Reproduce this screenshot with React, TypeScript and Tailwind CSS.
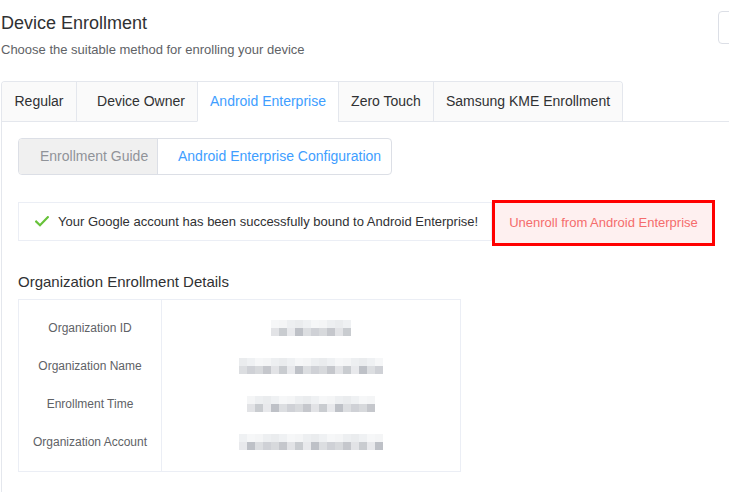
import React from 'react';

const tabs = [
  { label: 'Regular', cls: 'w-[74px]' },
  { label: 'Device Owner', cls: 'w-[121px] pl-[8px]' },
  { label: 'Android Enterprise', cls: 'w-[141px]', active: true },
  { label: 'Zero Touch', cls: 'w-[95px]' },
  { label: 'Samsung KME Enrollment', cls: 'w-[189px]' },
];

const details = [
  { label: 'Organization ID', width: 10, seed: 3 },
  { label: 'Organization Name', width: 18, seed: 7 },
  { label: 'Enrollment Time', width: 16, seed: 11 },
  { label: 'Organization Account', width: 18, seed: 5 },
];

const shades = ['#c4c7cc', '#d3d5d9', '#b8bbc1', '#dfe1e4', '#cacdd2', '#e6e7ea', '#bfc2c7', '#d9dbde'];
const faint = ['#eef0f2', '#f3f4f6', '#e8eaed', '#f6f7f8', '#eceef0'];

// pixelated stand-in for the redacted values
function Redacted({ width, seed }: { width: number; seed: number }) {
  const cells = Array.from({ length: width }, (_, i) => i);
  return (
    <div className="flex flex-col">
      <div className="flex">
        {cells.map(i => (
          <div key={i} className="w-[8px] h-[8px]" style={{ background: faint[(i * 3 + seed) % faint.length] }} />
        ))}
      </div>
      <div className="flex">
        {cells.map(i => (
          <div key={i} className="w-[8px] h-[8px]" style={{ background: shades[(i * 5 + seed) % shades.length] }} />
        ))}
      </div>
    </div>
  );
}

function CheckIcon() {
  return (
    <svg width="14" height="11" viewBox="0 0 14 11" className="shrink-0">
      <polyline points="1.2,5.6 5,9.2 12.8,1.2" fill="none" stroke="#67c23a" strokeWidth="2.2" strokeLinecap="square" />
    </svg>
  );
}

export default function App() {
  return (
    <div className="w-full min-h-[492px] overflow-hidden bg-white text-[#303133] pl-[1px] whitespace-nowrap" style={{ fontFamily: '"Liberation Sans", Arial, sans-serif' }}>
      {/* Header */}
      <div className="flex items-start">
        <div className="flex-1 pt-[11px]">
          <h1 className="text-[18px] leading-[24px] font-normal text-[#303133]">Device Enrollment</h1>
          <p className="text-[13px] leading-[20px] text-[#606266] mt-[5px]">Choose the suitable method for enrolling your device</p>
        </div>
        <button className="mt-[11px] w-[90px] h-[33px] shrink-0 mr-[-79px] border border-[#dcdfe6] rounded-[4px] bg-white" />
      </div>

      {/* Tabs */}
      <div className="flex mt-[21px]">
        <div className="flex border-t border-l border-r border-[#e4e7ed] rounded-t-[4px] overflow-hidden">
          {tabs.map((t, i) => (
            <div
              key={t.label}
              className={`${t.cls} h-[40px] leading-[39px] text-[14px] text-center border-b ${i > 0 ? 'border-l' : ''} border-[#e4e7ed] ${t.active ? 'bg-white text-[#409eff] border-b-white' : 'bg-[#fafafa] text-[#303133]'}`}
            >
              {t.label}
            </div>
          ))}
        </div>
        <div className="flex-1 border-b border-[#e4e7ed]" />
      </div>

      {/* Content panel */}
      <div className="border-l border-[#e4e7ed] pl-[16px] pt-[16px] pb-[20px]">
        <div className="flex w-[374px] h-[37px] border border-[#dcdfe6] rounded-[4px] overflow-hidden text-[14px] leading-[35px]">
          <div className="bg-[#f0f0f0] text-[#909399] pl-[21px] w-[139px] shrink-0 border-r border-[#dcdfe6]">Enrollment Guide</div>
          <div className="text-[#409eff] pl-[20px]">Android Enterprise Configuration</div>
        </div>

        <div className="flex items-start mt-[25px]">
          <div className="mt-[2px] w-[474px] shrink-0 h-[39px] border border-[#ebeef5] flex items-center gap-[9px] pl-[16px] overflow-hidden">
            <CheckIcon />
            <span className="text-[13px] text-[#303133]">Your Google account has been successfully bound to Android Enterprise!</span>
          </div>
          <div className="w-[223px] shrink-0 h-[46px] border-[3px] border-[#ff0000] bg-[#fef0f0] flex items-center justify-center">
            <span className="text-[13px] text-[#f56c6c]">Unenroll from Android Enterprise</span>
          </div>
        </div>

        <h2 className="mt-[26px] text-[15px] leading-[20px] font-normal text-[#303133]">Organization Enrollment Details</h2>

        <div className="mt-[7px] w-[443px] h-[173px] border border-[#ebeef5] flex">
          <div className="w-[143px] border-r border-[#ebeef5] py-[9px] flex flex-col">
            {details.map(d => (
              <div key={d.label} className="h-[38px] flex items-center justify-center text-[12px] text-[#606266]">
                {d.label}
              </div>
            ))}
          </div>
          <div className="flex-1 py-[9px] flex flex-col">
            {details.map(d => (
              <div key={d.label} className="h-[38px] flex items-center justify-center">
                <div className="blur-[0.6px] opacity-90">
                  <Redacted width={d.width} seed={d.seed} />
                </div>
              </div>
            ))}
          </div>
        </div>
      </div>
    </div>
  );
}
